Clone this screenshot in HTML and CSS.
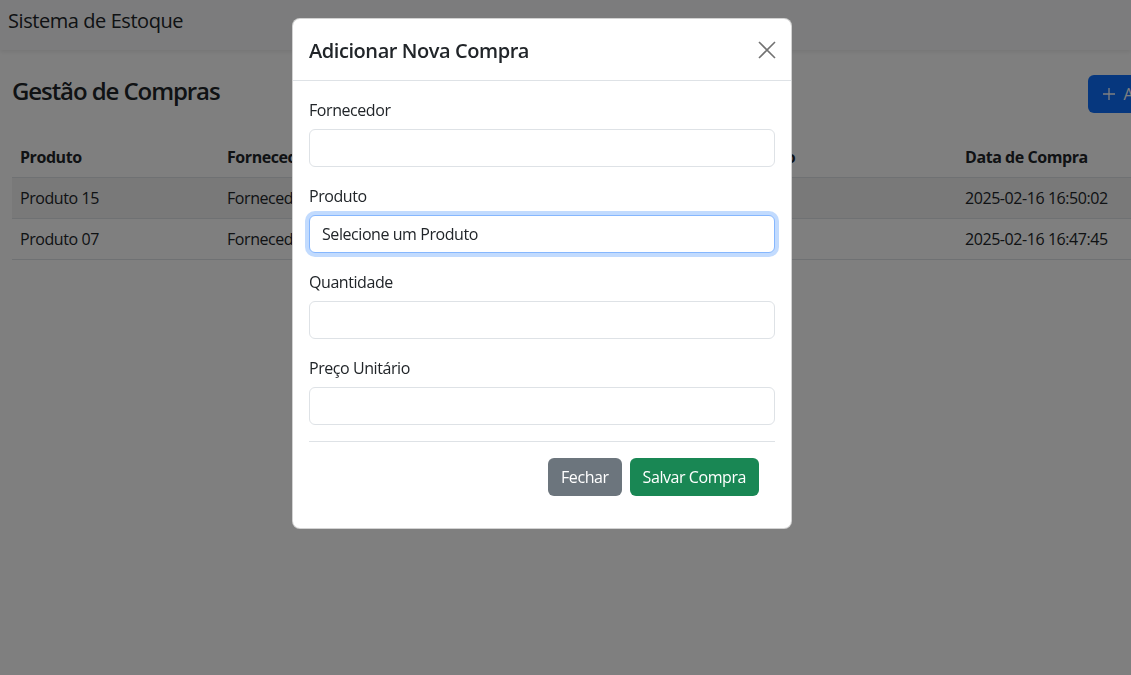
FILE: index.html
```html
<!DOCTYPE html>
<html lang="pt-BR">
<head>
<meta charset="utf-8">
<title>Sistema de Estoque</title>
<link rel="stylesheet" href="styles.css">
</head>
<body>
<nav class="navbar">
  <span class="brand">Sistema de Estoque</span>
</nav>
<main class="page">
  <div class="page-head">
    <h2 class="page-title">Gestão de Compras</h2>
    <button class="btn btn-primary">
      <svg class="plus" viewBox="0 0 16 16" width="16" height="16"><path d="M8 2v12M2 8h12" stroke="currentColor" stroke-width="1.3" fill="none"/></svg>
      Adicionar Compra
    </button>
  </div>
  <table class="table">
    <colgroup>
      <col class="c1"><col class="c2"><col class="c3"><col class="c4"><col class="c5"><col class="c6">
    </colgroup>
    <thead>
      <tr><th>Produto</th><th>Fornecedor</th><th>Quantidade</th><th>Preço Unitário</th><th>Data de Compra</th><th>Ações</th></tr>
    </thead>
    <tbody>
      <tr class="striped"><td>Produto 15</td><td>Fornecedor 03</td><td>10</td><td>R$ 12,50</td><td>2025-02-16 16:50:02</td><td></td></tr>
      <tr><td>Produto 07</td><td>Fornecedor 01</td><td>5</td><td>R$ 8,90</td><td>2025-02-16 16:47:45</td><td></td></tr>
    </tbody>
  </table>
</main>

<div class="backdrop"></div>

<div class="modal">
  <div class="modal-header">
    <h5 class="modal-title">Adicionar Nova Compra</h5>
    <button class="btn-close" aria-label="Fechar">
      <svg viewBox="0 0 18 18" width="18" height="18"><path d="M1 1L17 17M17 1L1 17" stroke="currentColor" stroke-width="1.6" fill="none"/></svg>
    </button>
  </div>
  <form class="modal-body">
    <div class="field">
      <label class="form-label">Fornecedor</label>
      <input class="form-control" type="text">
    </div>
    <div class="field">
      <label class="form-label">Produto</label>
      <select class="form-control focus"><option>Selecione um Produto</option></select>
    </div>
    <div class="field">
      <label class="form-label">Quantidade</label>
      <input class="form-control" type="text">
    </div>
    <div class="field">
      <label class="form-label">Preço Unitário</label>
      <input class="form-control" type="text">
    </div>
    <div class="modal-footer">
      <button type="button" class="btn btn-secondary">Fechar</button>
      <button type="button" class="btn btn-success">Salvar Compra</button>
    </div>
  </form>
</div>
</body>
</html>
```
FILE: styles.css
```css
* { box-sizing: border-box; }
html, body { margin: 0; padding: 0; overflow: hidden; }
body {
  font-family: "Open Sans", "Noto Sans", sans-serif;
  font-size: 16px;
  line-height: 1.5;
  letter-spacing: -0.027em;
  color: #212529;
  background: #fff;
  width: 1131px;
  height: 675px;
}
.navbar {
  height: 50px;
  background: #f8f9fa;
  padding: 6px 8px 0;
  box-shadow: 0 2px 4px rgba(0,0,0,.08);
}
.brand { font-size: 20px; line-height: 30px; }

.page {
  width: 1276px;
  padding: 25px 12px 0;
}
.page-head {
  display: flex;
  justify-content: space-between;
  align-items: center;
  margin-bottom: 24px;
}
.page-title { margin: 0 0 6px; font-size: 24px; font-weight: 600; line-height: 1.2; letter-spacing: -0.045em; }
.btn {
  font-family: inherit;
  font-size: 16px;
  line-height: 24px;
  letter-spacing: inherit;
  padding: 6px 12px;
  border: 1px solid transparent;
  border-radius: 6px;
  color: #fff;
  cursor: pointer;
}
.btn-primary { background: #0d6efd; display: inline-flex; align-items: center; gap: 7px; }
.btn-secondary { background: #6c757d; }
.btn-success { background: #198754; }
.plus { display: block; }

.table { width: 100%; border-collapse: collapse; table-layout: fixed; }
.table th, .table td {
  text-align: left;
  padding: 8px;
  border-bottom: 1px solid #dee2e6;
  white-space: nowrap;
  overflow: hidden;
}
.table th { font-weight: 700; }
.c1 { width: 207px; }
.c2 { width: 232px; }
.c3 { width: 227px; }
.c4 { width: 279px; }
.c5 { width: 175px; }
.striped td { background: rgba(0,0,0,.05); }

.backdrop {
  position: fixed;
  inset: 0;
  background: rgba(0,0,0,.5);
}
.modal {
  position: fixed;
  left: 292px;
  top: 18px;
  width: 500px;
  background: #fff;
  border: 1px solid rgba(0,0,0,.175);
  border-radius: 8px;
}
.modal-header {
  display: flex;
  align-items: center;
  justify-content: space-between;
  padding: 17px 16px 14px;
  border-bottom: 1px solid #dee2e6;
}
.modal-title { margin: 0; font-size: 20px; font-weight: 600; line-height: 30px; }
.btn-close {
  border: 0;
  background: none;
  padding: 0;
  margin-right: -1px;
  margin-top: -2px;
  color: #000;
  opacity: .55;
  width: 18px;
  height: 18px;
  cursor: pointer;
}
.btn-close svg { display: block; }
.modal-body { padding: 16px; margin: 0; }
.field { margin-bottom: 16px; }
.form-label { display: block; padding-top: 1px; margin-bottom: 7px; }
.form-control {
  display: block;
  width: 100%;
  height: 38px;
  padding: 6px 12px;
  font-family: inherit;
  font-size: 16px;
  line-height: 24px;
  letter-spacing: inherit;
  color: #212529;
  background: #fff;
  border: 1px solid #dee2e6;
  border-radius: 6px;
  appearance: none;
  -webkit-appearance: none;
}
.form-control.focus {
  border-color: #86b7fe;
  box-shadow: 0 0 0 4px rgba(13,110,253,.25);
}
.modal-footer {
  display: flex;
  justify-content: flex-end;
  gap: 8px;
  padding: 16px 16px 16px;
  border-top: 1px solid #dee2e6;
}
```
